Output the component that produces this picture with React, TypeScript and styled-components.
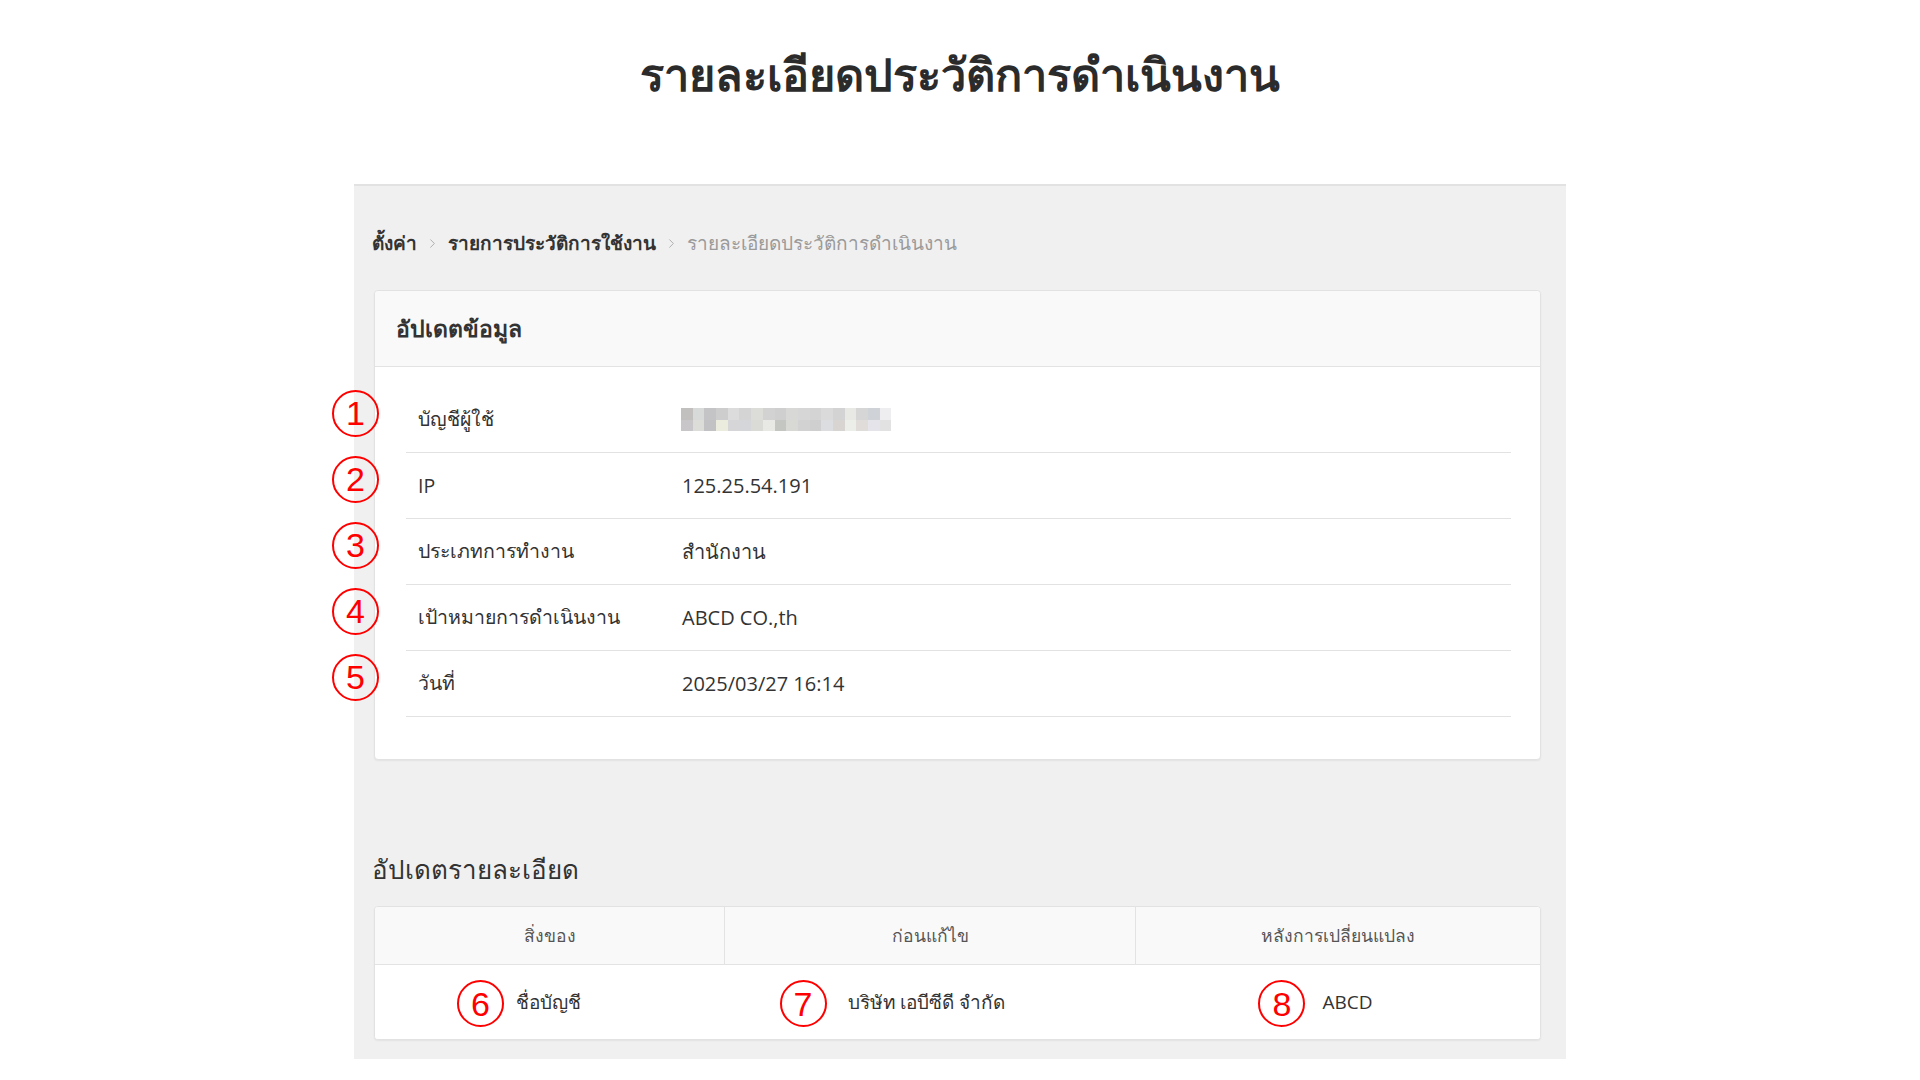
import styled, { createGlobalStyle } from "styled-components";
import { ChevronRight } from "lucide-react";

const GlobalStyle = createGlobalStyle`
    * {
        box-sizing: border-box;
    }
    body {
        margin: 0;
        background: #fff;
        color: #333;
        font-family: "Open Sans", "Noto Sans", "DejaVu Sans", sans-serif;
    }
`;

const Page = styled.div`
    width: 1920px;
    min-height: 1080px;
    padding-top: 44px;
`;

const PageTitle = styled.h1`
    margin: 0 0 80px;
    text-align: center;
    font-size: 45px;
    line-height: 60px;
    font-weight: 600;
    color: #2b2b2b;
`;

const Panel = styled.div`
    width: 1212px;
    margin: 0 auto;
    background: #f0f0f0;
    border-top: 2px solid #e2e2e2;
    padding: 42px 25px 19px 20px;
`;

const Breadcrumb = styled.nav`
    display: flex;
    align-items: center;
    gap: 8px;
    height: 30px;
    margin-left: -2px;
    margin-bottom: 32px;
    font-size: 19px;
`;

const Crumb = styled.span<{ $current?: boolean }>`
    color: ${(p) => (p.$current ? "#9a9a9a" : "#333")};
    font-weight: ${(p) => (p.$current ? 400 : 700)};
`;

const Chevron = styled(ChevronRight)`
    color: #aaa;
    flex-shrink: 0;
`;

const Card = styled.div`
    background: #fff;
    border: 1px solid #e2e2e2;
    border-radius: 4px;
    box-shadow: 0 1px 2px rgba(0, 0, 0, 0.06);
`;

const CardHeader = styled.div`
    display: flex;
    align-items: center;
    height: 76px;
    padding: 0 21px;
    background: #f9f9f9;
    border-bottom: 1px solid #e3e3e3;
    border-radius: 4px 4px 0 0;
    font-size: 23px;
    font-weight: 700;
    color: #333;
`;

const CardBody = styled.div`
    padding: 20px 29px 42px 31px;
`;

const InfoRow = styled.div`
    position: relative;
    display: flex;
    align-items: center;
    height: 66px;
    padding-left: 12px;
    border-bottom: 1px solid #e2e2e2;
    font-size: 20px;
    color: #333;
`;

const Label = styled.div`
    width: 264px;
    flex-shrink: 0;
    font-size: 19.5px;
`;

const Value = styled.div`
    color: #333;
`;

const Mosaic = styled.div`
    display: grid;
    grid-template-columns: repeat(18, 11.7px);
    grid-auto-rows: 11.5px;
    margin-left: -1px;
`;

const MosaicCell = styled.div<{ $c: string }>`
    background: ${(p) => p.$c};
`;

const Marker = styled.div`
    position: absolute;
    display: flex;
    align-items: center;
    justify-content: center;
    width: 47px;
    height: 47px;
    border: 2px solid #ff0000;
    border-radius: 50%;
    color: #ff0000;
    font-family: "Liberation Sans", Arial, sans-serif;
    font-size: 34px;
    line-height: 1;
`;

const RowMarker = styled(Marker)`
    left: -74px;
    top: 50%;
    margin-top: -30px;
`;

const SectionTitle = styled.h2`
    margin: 91px 0 19px -2px;
    height: 36px;
    line-height: 36px;
    font-size: 26px;
    font-weight: 500;
    color: #333;
`;

const Table = styled.div`
    background: #fff;
    border: 1px solid #e2e2e2;
    border-radius: 4px;
    box-shadow: 0 1px 2px rgba(0, 0, 0, 0.06);
    overflow: hidden;
`;

const TableRow = styled.div<{ $head?: boolean }>`
    display: grid;
    grid-template-columns: 349px 411px 1fr;
    height: ${(p) => (p.$head ? 58 : 74)}px;
    background: ${(p) => (p.$head ? "#f9f9f9" : "#fff")};
    border-bottom: ${(p) => (p.$head ? "1px solid #e3e3e3" : "none")};
`;

const HeadCell = styled.div`
    display: flex;
    align-items: center;
    justify-content: center;
    font-size: 17.5px;
    color: #555;
    & + & {
        border-left: 1px solid #e3e3e3;
    }
`;

const Cell = styled.div`
    display: flex;
    align-items: center;
    justify-content: center;
    font-size: 19px;
    color: #333;
`;

const CellText = styled.span<{ $shift: number }>`
    position: relative;
    left: ${(p) => p.$shift}px;
`;

const CellMarker = styled(Marker)<{ $gap: number }>`
    right: calc(100% + ${(p) => p.$gap}px);
    top: 50%;
    margin-top: -22px;
`;

const mosaic = [
    "#c2bfbf", "#d8d9d9", "#c4c4c6", "#cdcdcd", "#dcdcdc", "#d4d4d4",
    "#dcdcd8", "#d2d2d2", "#cfcfcf", "#d8d8d6", "#d6d6d6", "#d4d4d4",
    "#dadada", "#d3d3d3", "#e8e8e4", "#d6d6d6", "#cfd3d8", "#eeeef0",
    "#c8c6c8", "#dcdcd8", "#c2c2c4", "#ececde", "#d6d6d8", "#d4d6da",
    "#dadad6", "#e8e8e4", "#c4c6c2", "#d8d8d4", "#d2d2d2", "#cfcfcf",
    "#dcdde0", "#d8d4d2", "#eceeea", "#e0dcda", "#e4e4ea", "#e2e2e2",
];

const rows = [
    { n: 1, label: "บัญชีผู้ใช้", value: null },
    { n: 2, label: "IP", value: "125.25.54.191" },
    { n: 3, label: "ประเภทการทำงาน", value: "สำนักงาน" },
    { n: 4, label: "เป้าหมายการดำเนินงาน", value: "ABCD CO.,th" },
    { n: 5, label: "วันที่", value: "2025/03/27 16:14" },
];

const App = () => {
    return (
        <Page>
            <GlobalStyle />
            <PageTitle>รายละเอียดประวัติการดำเนินงาน</PageTitle>
            <Panel>
                <Breadcrumb>
                    <Crumb>ตั้งค่า</Crumb>
                    <Chevron size={15} strokeWidth={1.5} />
                    <Crumb>รายการประวัติการใช้งาน</Crumb>
                    <Chevron size={15} strokeWidth={1.5} />
                    <Crumb $current>รายละเอียดประวัติการดำเนินงาน</Crumb>
                </Breadcrumb>
                <Card>
                    <CardHeader>อัปเดตข้อมูล</CardHeader>
                    <CardBody>
                        {rows.map((row) => (
                            <InfoRow key={row.n}>
                                <RowMarker>{row.n}</RowMarker>
                                <Label>{row.label}</Label>
                                {row.value ? (
                                    <Value>{row.value}</Value>
                                ) : (
                                    <Mosaic>
                                        {mosaic.map((c, i) => (
                                            <MosaicCell key={i} $c={c} />
                                        ))}
                                    </Mosaic>
                                )}
                            </InfoRow>
                        ))}
                    </CardBody>
                </Card>
                <SectionTitle>อัปเดตรายละเอียด</SectionTitle>
                <Table>
                    <TableRow $head>
                        <HeadCell>สิ่งของ</HeadCell>
                        <HeadCell>ก่อนแก้ไข</HeadCell>
                        <HeadCell>หลังการเปลี่ยนแปลง</HeadCell>
                    </TableRow>
                    <TableRow>
                        <Cell>
                            <CellText $shift={-1}>
                                <CellMarker $gap={12}>6</CellMarker>
                                ชื่อบัญชี
                            </CellText>
                        </Cell>
                        <Cell>
                            <CellText $shift={-3}>
                                <CellMarker $gap={21}>7</CellMarker>
                                บริษัท เอบีซีดี จำกัด
                            </CellText>
                        </Cell>
                        <Cell>
                            <CellText $shift={10}>
                                <CellMarker $gap={17}>8</CellMarker>
                                ABCD
                            </CellText>
                        </Cell>
                    </TableRow>
                </Table>
            </Panel>
        </Page>
    );
};

export default App;
